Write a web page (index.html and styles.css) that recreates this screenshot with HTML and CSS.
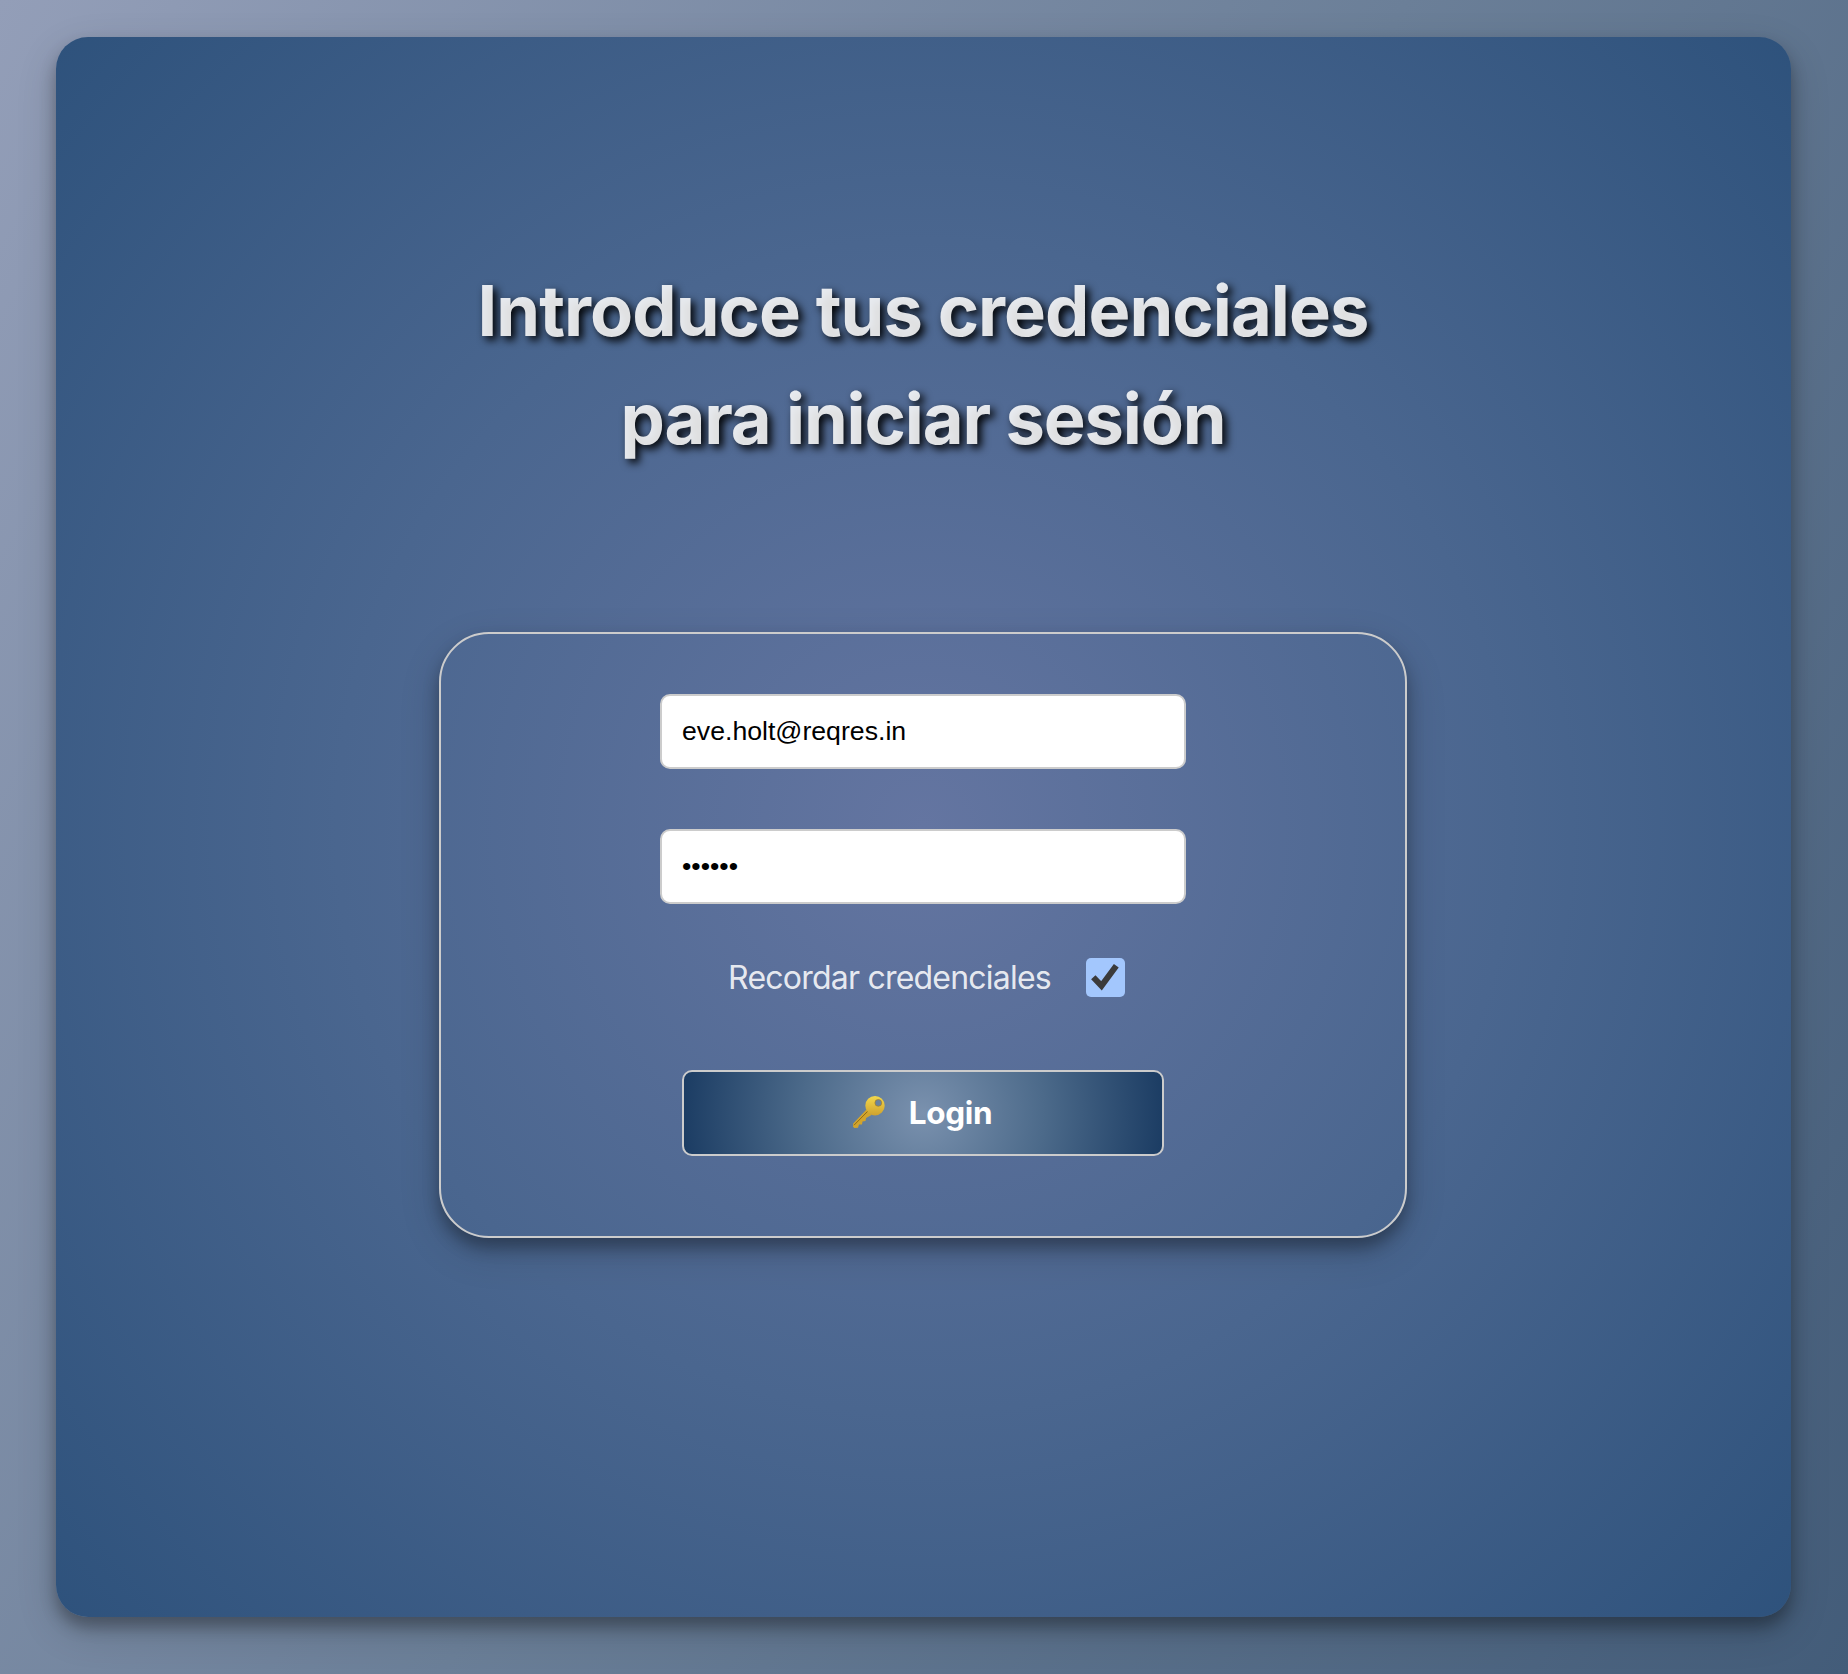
FILE: index.html
```html
<!DOCTYPE html>
<html lang="es">
<head>
<meta charset="utf-8">
<title>Login</title>
<link rel="stylesheet" href="styles.css">
</head>
<body>
<main class="card">
  <h1 class="title"><span class="line line-a">Introduce tus credenciales</span><span class="line line-b">para iniciar sesión</span></h1>
  <form class="form">
    <input class="field" type="email" value="eve.holt@reqres.in" aria-label="Email">
    <input class="field" type="password" value="cityaa" aria-label="Password">
    <label class="remember">
      <span class="remember-text">Recordar credenciales</span>
      <svg class="check" viewBox="0 0 39 39"><rect width="39" height="39" rx="5" fill="#a3c7fd"/><path d="M7.300 19.200l8.200 8.600L30.300 7.700" fill="none" stroke="#3b3b3b" stroke-width="6"/></svg>
    </label>
    <button class="login" type="button">
      <svg class="key" viewBox="0 0 34 34">
        <defs>
          <linearGradient id="gold" x1="0" y1="0" x2="0" y2="1"><stop offset="0" stop-color="#f3d84b"/><stop offset="1" stop-color="#cfa22e"/></linearGradient>
        </defs>
        <path d="M14.500 14.500L1.200 28.600l-.2 3.200 1.400 1.200 3.600-.2 1-3.200 3-.2.500-3 3-.3.600-3 5.400-3z" fill="#d2a42c"/>
        <path d="M16 16L2 30.200" stroke="#8f6a17" stroke-width="1"/>
        <path fill-rule="evenodd" d="M23 1a9.700 9.700 0 1 1 0 19.400a9.700 9.700 0 0 1 0-19.400zM26.300 4.600a3.300 3.300 0 1 0 0 6.600a3.300 3.300 0 0 0 0-6.600z" fill="url(#gold)"/>
        <circle cx="26.300" cy="7.900" r="3.400" fill="none" stroke="#a88020" stroke-width=".7"/>
      </svg>
      <span class="login-text">Login</span>
    </button>
  </form>
</main>
</body>
</html>
```
FILE: styles.css
```css
* { box-sizing: border-box; }
body {
  margin: 0;
  height: 1674px;
  padding: 37px 57px 57px 56px;
  background: linear-gradient(120deg, #939eb8, #6b7f98 50%, #435c79);
  font-family: Inter, sans-serif;
  line-height: 1.5;
  color: rgba(255, 255, 255, .87);
  overflow: hidden;
}
.card {
  height: 1580px;
  border-radius: 32px;
  background: radial-gradient(circle, #6475a1, #4a668f 50%, #2e527c);
  box-shadow: 0 10px 16px rgba(0, 0, 0, .3), 0 14px 40px rgba(0, 0, 0, .16);
  display: flex;
  flex-direction: column;
  align-items: center;
  padding: 220px 1px 0 0;
}
.title {
  margin: 0 0 159px;
  font-size: 70.4px;
  font-weight: 700;
  line-height: 108px;
  text-align: center;
  text-shadow: 4px 4px 8px #000;
}
.line { display: block; white-space: nowrap; }
.line-a { letter-spacing: -.95px; }
.line-b { letter-spacing: -1.150px; }
.form {
  width: 968px;
  height: 606px;
  border: 2px solid #ccc;
  border-radius: 50px;
  padding-top: 60px;
  display: flex;
  flex-direction: column;
  align-items: center;
  box-shadow: 0 10px 16px rgba(0, 0, 0, .3), 0 14px 40px rgba(0, 0, 0, .16);
}
.field {
  width: 526px;
  height: 75px;
  margin: 0 0 60px;
  padding: 0 20px;
  border: 2px solid #ccc;
  border-radius: 10px;
  background: #fff;
  color: #000;
  font: 26.67px "Liberation Sans", Arial, sans-serif;
}
.remember {
  display: flex;
  align-items: center;
  height: 48px;
  margin: -11px 0 69px 7px;
  font-size: 32px;
  gap: 35px;
}
.remember-text { letter-spacing: -.78px; white-space: nowrap; padding-top: 2px; }
.check { width: 39px; height: 39px; }
.login {
  width: 482px;
  height: 86px;
  padding: 0 2px 2px 0;
  border: 2px solid #ccc;
  border-radius: 10px;
  background: radial-gradient(circle, #7a91ae, #4c6a8a 50%, #1b3c63);
  color: #fff;
  display: flex;
  align-items: center;
  justify-content: center;
  gap: 23px;
  font: 700 31.500px Inter, sans-serif;
}
.key { width: 34px; height: 34px; }
.login-text { letter-spacing: -.35px; }
```
